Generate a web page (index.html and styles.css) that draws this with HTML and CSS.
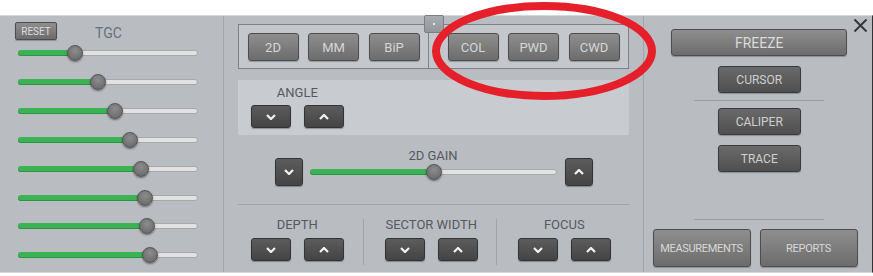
FILE: index.html
```html
<html lang="en">
<head>
    <meta charset="UTF-8">
    <title>Ultrasound Controls</title>
    <link rel="stylesheet" href="styles.css">
</head>
<body>
    <div class="screen">
        <div class="panel">
            <!-- TGC sliders -->
            <div class="tgc">
                <div class="tgc-head">
                    <div class="btn btn-reset">RESET</div>
                    <label class="tgc-title">TGC</label>
                </div>
                <div class="tgc-row"><div class="track"><div class="fill" style="width:57px"></div><div class="thumb" style="left:57px"></div></div></div>
                <div class="tgc-row"><div class="track"><div class="fill" style="width:80px"></div><div class="thumb" style="left:80px"></div></div></div>
                <div class="tgc-row"><div class="track"><div class="fill" style="width:97px"></div><div class="thumb" style="left:97px"></div></div></div>
                <div class="tgc-row"><div class="track"><div class="fill" style="width:112px"></div><div class="thumb" style="left:112px"></div></div></div>
                <div class="tgc-row"><div class="track"><div class="fill" style="width:123px"></div><div class="thumb" style="left:123px"></div></div></div>
                <div class="tgc-row"><div class="track"><div class="fill" style="width:127px"></div><div class="thumb" style="left:127px"></div></div></div>
                <div class="tgc-row"><div class="track"><div class="fill" style="width:129px"></div><div class="thumb" style="left:129px"></div></div></div>
                <div class="tgc-row"><div class="track"><div class="fill" style="width:132px"></div><div class="thumb" style="left:132px"></div></div></div>
            </div>

            <!-- imaging controls -->
            <div class="ctrl">
                <div class="modes">
                    <div class="mode-box">
                        <div class="btn btn-mode">2D</div>
                        <div class="btn btn-mode">MM</div>
                        <div class="btn btn-mode">BiP</div>
                    </div>
                    <div class="mode-box mode-box2">
                        <div class="btn btn-mode">COL</div>
                        <div class="btn btn-mode">PWD</div>
                        <div class="btn btn-mode">CWD</div>
                    </div>
                </div>
                <div class="angle">
                    <div class="grp">
                        <div class="lbl">ANGLE</div>
                        <div class="arrows">
                            <div class="arr"><svg width="10" height="6" viewBox="0 0 10 6"><polyline points="1,1 5,5 9,1" /></svg></div>
                            <div class="arr"><svg width="10" height="6" viewBox="0 0 10 6"><polyline points="1,5 5,1 9,5" /></svg></div>
                        </div>
                    </div>
                </div>
                <div class="gain">
                    <div class="arr arr-sq"><svg width="10" height="6" viewBox="0 0 10 6"><polyline points="1,1 5,5 9,1" /></svg></div>
                    <div class="gain-mid">
                        <div class="lbl">2D GAIN</div>
                        <div class="gain-slider"><div class="track track-gain"><div class="fill" style="width:124px"></div><div class="thumb" style="left:124px"></div></div></div>
                    </div>
                    <div class="arr arr-sq"><svg width="10" height="6" viewBox="0 0 10 6"><polyline points="1,5 5,1 9,5" /></svg></div>
                </div>
                <div class="bottom">
                    <div class="col">
                        <div class="grp">
                            <div class="lbl">DEPTH</div>
                            <div class="arrows">
                                <div class="arr"><svg width="10" height="6" viewBox="0 0 10 6"><polyline points="1,1 5,5 9,1" /></svg></div>
                                <div class="arr"><svg width="10" height="6" viewBox="0 0 10 6"><polyline points="1,5 5,1 9,5" /></svg></div>
                            </div>
                        </div>
                    </div>
                    <div class="col col-sep">
                        <div class="grp">
                            <div class="lbl">SECTOR WIDTH</div>
                            <div class="arrows">
                                <div class="arr"><svg width="10" height="6" viewBox="0 0 10 6"><polyline points="1,1 5,5 9,1" /></svg></div>
                                <div class="arr"><svg width="10" height="6" viewBox="0 0 10 6"><polyline points="1,5 5,1 9,5" /></svg></div>
                            </div>
                        </div>
                    </div>
                    <div class="col col-sep">
                        <div class="grp">
                            <div class="lbl">FOCUS</div>
                            <div class="arrows">
                                <div class="arr"><svg width="10" height="6" viewBox="0 0 10 6"><polyline points="1,1 5,5 9,1" /></svg></div>
                                <div class="arr"><svg width="10" height="6" viewBox="0 0 10 6"><polyline points="1,5 5,1 9,5" /></svg></div>
                            </div>
                        </div>
                    </div>
                </div>
            </div>

            <!-- tools -->
            <div class="tools">
                <div class="btn btn-freeze">FREEZE</div>
                <div class="btn btn-tool">CURSOR</div>
                <div class="sep"></div>
                <div class="btn btn-tool btn-caliper">CALIPER</div>
                <div class="btn btn-tool">TRACE</div>
                <div class="sep sep-low"></div>
                <div class="tools-foot">
                    <div class="btn btn-big">MEASUREMENTS</div>
                    <div class="btn btn-big">REPORTS</div>
                </div>
            </div>
        </div>

        <div class="mini"><span></span></div>
        <svg class="close" width="15" height="15" viewBox="0 0 15 15"><line x1="1.5" y1="1.5" x2="13.5" y2="13.5" /><line x1="13.5" y1="1.5" x2="1.5" y2="13.5" /></svg>
        <svg class="mark" width="873" height="276" viewBox="0 0 873 276"><ellipse cx="544" cy="51" rx="108" ry="45" /></svg>
    </div>
</body>
</html>
```

FILE: styles.css
```css
body{
    margin: 0;
    background: #ffffff;
    font-family: Roboto, "Liberation Sans", sans-serif;
}
.screen{
    position: relative;
    width: 873px;
    height: 276px;
    overflow: hidden;
}
.panel{
    margin-top: 15px;
    height: 256px;
    display: flex;
    background: #b9bdc2;
    border-top: 1px solid #d4d7da;
    border-bottom: 1px solid #d4d7da;
    border-right: 1px solid #333;
}
.btn{
    box-sizing: border-box;
    display: flex;
    align-items: center;
    justify-content: center;
    border: 1px solid #4d4d4d;
    border-radius: 3px;
    color: #d6d6d6;
    background: linear-gradient(#8e8e8e, #6c6c6c);
    box-shadow: 0 1px 1px rgba(0, 0, 0, .25);
}

/* TGC */
.tgc{
    box-sizing: border-box;
    width: 224px;
    border-right: 1px solid #a2a6ab;
    padding: 6px 0 0 15px;
}
.tgc-head{
    display: flex;
    height: 17px;
}
.btn-reset{
    width: 42px;
    height: 18px;
    font-size: 10px;
    border-radius: 2px;
    color: #dcdcdc;
}
.tgc-title{
    margin: 3px 0 0 38px;
    font-size: 14px;
    line-height: 16px;
    color: #6a6f7e;
}
.tgc-row{
    height: 28.85px;
    display: flex;
    align-items: center;
    padding-left: 3px;
}
.track{
    position: relative;
    box-sizing: border-box;
    width: 180px;
    height: 6px;
    border-radius: 3px;
    background: #e2e2e2;
    border: 1px solid #a8a8a8;
}
.fill{
    position: absolute;
    left: -1px;
    top: -1px;
    height: 6px;
    border-radius: 3px;
    background: #3bb254;
    box-shadow: inset 0 -1px 0 #2c9442;
}
.thumb{
    position: absolute;
    top: -6px;
    width: 16px;
    height: 16px;
    margin-left: -9px;
    box-sizing: border-box;
    border-radius: 50%;
    border: 1px solid #555;
    background: radial-gradient(circle at 50% 35%, #8d8d8d, #626262);
    box-shadow: 0 1px 2px rgba(0, 0, 0, .45);
}

/* middle */
.ctrl{
    box-sizing: border-box;
    width: 420px;
    border-right: 1px solid #a2a6ab;
    padding: 8px 14px 0 14px;
}
.modes{
    display: flex;
}
.mode-box{
    box-sizing: border-box;
    display: flex;
    gap: 9.5px;
    width: 191px;
    height: 45px;
    padding: 4px 0 0 9px;
    border: 1px solid #7e8288;
    background: #c4c8cc;
}
.mode-box2{
    width: 200px;
    border-left: none;
    padding-left: 19px;
}
.btn-mode{
    width: 51px;
    height: 28px;
    margin-top: 4px;
    font-size: 13px;
}
.angle{
    height: 55px;
    margin-top: 11px;
    padding: 5px 0 0 13px;
    box-sizing: border-box;
    background: #c8ccd0;
}
.grp{
    width: 93.5px;
    text-align: center;
}
.lbl{
    font-size: 13px;
    line-height: 15px;
    color: #55595f;
}
.arrows{
    display: flex;
    justify-content: space-between;
    margin-top: 5px;
}
.arr{
    box-sizing: border-box;
    width: 40px;
    height: 23px;
    display: flex;
    align-items: center;
    justify-content: center;
    border: 1px solid #333;
    border-radius: 3px;
    background: linear-gradient(#5c5c5c, #444);
    box-shadow: 0 1px 1px rgba(0, 0, 0, .3);
}
.arr svg polyline{
    fill: none;
    stroke: #f2f2f2;
    stroke-width: 2.2;
}
.gain{
    display: flex;
    align-items: flex-start;
    padding: 13px 0 0 37px;
}
.arr-sq{
    width: 28px;
    height: 28px;
    margin-top: 10px;
}
.gain-mid{
    width: 247px;
    margin: 0 8px 0 7px;
    text-align: center;
}
.gain-slider{
    height: 18px;
    display: flex;
    align-items: center;
}
.track-gain{
    width: 247px;
}
.bottom{
    display: flex;
    margin-top: 18px;
    padding-top: 14px;
    border-top: 1px solid #a0a4a9;
}
.col{
    box-sizing: border-box;
    width: 128px;
    height: 46px;
    padding-left: 13px;
}
.col-sep{
    width: 136px;
    padding-left: 21px;
    border-left: 1px solid #a0a4a9;
}
.col .lbl{
    margin-top: -2px;
}
.col .arrows{
    margin-top: 6px;
}

/* tools */
.tools{
    box-sizing: border-box;
    width: 229px;
    padding-left: 3px;
    display: flex;
    flex-direction: column;
    align-items: center;
}
.btn-freeze{
    width: 176px;
    height: 27px;
    margin-top: 13px;
    font-size: 14px;
    color: #dadada;
}
.btn-tool{
    width: 83px;
    height: 27px;
    margin-top: 10px;
    font-size: 12px;
    color: #cfcfcf;
    border-color: #3a3a3a;
    background: linear-gradient(#6a6a6a, #4f4f4f);
}
.btn-caliper{
    margin-top: 7px;
}
.sep{
    width: 130px;
    height: 1px;
    margin-top: 7px;
    background: #9a9ea3;
}
.sep-low{
    margin-top: 47px;
}
.tools-foot{
    align-self: flex-start;
    display: flex;
    gap: 9px;
    margin-top: 9px;
    padding-left: 6px;
}
.btn-big{
    width: 98px;
    height: 38px;
    font-size: 11px;
    letter-spacing: -.3px;
    color: #d8d8d8;
}

/* overlays */
.mini{
    position: absolute;
    left: 424px;
    top: 15px;
    width: 20px;
    height: 18px;
    box-sizing: border-box;
    border: 1px solid #7b7f84;
    border-radius: 2px;
    background: linear-gradient(#a9adb2, #93979c);
    display: flex;
    align-items: center;
    justify-content: center;
}
.mini span{
    width: 2px;
    height: 2px;
    background: #e8e8e8;
}
.close{
    position: absolute;
    left: 853px;
    top: 18px;
}
.close line{
    stroke: #363636;
    stroke-width: 2;
}
.mark{
    position: absolute;
    left: 0;
    top: 0;
    pointer-events: none;
}
.mark ellipse{
    fill: none;
    stroke: #e5202a;
    stroke-width: 8;
}
```
